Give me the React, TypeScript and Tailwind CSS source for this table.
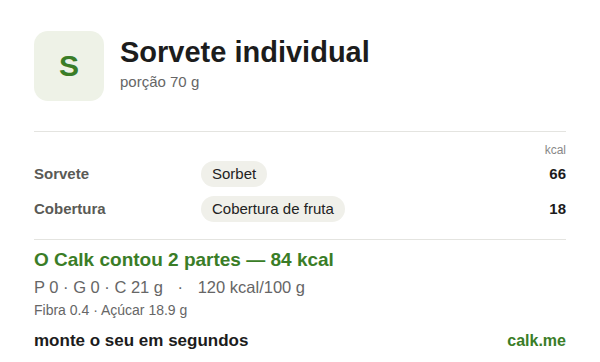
import React from 'react';

// linhas do prato
const parts = [
  { label: 'Sorvete', item: 'Sorbet', kcal: 66 },
  { label: 'Cobertura', item: 'Cobertura de fruta', kcal: 18 },
];

const App: React.FC = () => {
  return (
    <div
      className="w-[600px] h-[362px] bg-white px-[34px] pt-[31px] overflow-hidden"
      style={{ fontFamily: '"Liberation Sans", Arial, sans-serif' }}
    >
      {/* Cabeçalho */}
      <div className="flex items-center gap-4">
        <div className="w-[70px] h-[70px] rounded-[14px] bg-[#eef2e7] flex items-center justify-center">
          <span className="text-[30px] font-bold text-[#3a7d27] leading-none">S</span>
        </div>
        <div className="flex flex-col -mt-[4px]">
          <h1 className="text-[29px] font-bold text-[#1c1c1c] leading-[32px]">Sorvete individual</h1>
          <p className="text-[15px] text-[#666] leading-[20px] mt-[4px]">porção 70 g</p>
        </div>
      </div>

      <div className="border-t border-[#e4e4e0] mt-[30px]" />

      {/* Tabela */}
      <div className="pt-[10px]">
        <div className="text-right text-[12px] text-[#888] leading-[16px]">kcal</div>
        <div className="flex flex-col gap-[9px] mt-[3px]">
          {parts.map((p) => (
            <div key={p.label} className="flex items-center h-[26px]">
              <span className="w-[167px] text-[15px] font-bold text-[#5a5a55]">{p.label}</span>
              <span className="px-[11px] h-[26px] flex items-center rounded-full bg-[#f0f0ea] text-[15px] text-[#222]">
                {p.item}
              </span>
              <span className="ml-auto text-[15px] font-bold text-[#1c1c1c]">{p.kcal}</span>
            </div>
          ))}
        </div>
      </div>

      <div className="border-t border-[#e4e4e0] mt-[17px]" />

      {/* Resumo */}
      <div className="pt-[8px]">
        <p className="text-[19px] font-bold text-[#3a7d27] leading-[24px]">O Calk contou 2 partes — 84 kcal</p>
        <p className="text-[16.5px] text-[#666] leading-[22px] mt-[4px]">
          P 0 · G 0 · C 21 g <span className="mx-[10px]">·</span> 120 kcal/100 g
        </p>
        <p className="text-[14px] text-[#666] leading-[18px] mt-[3px]">Fibra 0.4 · Açúcar 18.9 g</p>
        <div className="flex items-center justify-between mt-[9px]">
          <span className="text-[17px] font-bold text-[#1c1c1c]">monte o seu em segundos</span>
          <span className="text-[16px] font-bold text-[#3a7d27]">calk.me</span>
        </div>
      </div>
    </div>
  );
};

export default App;
